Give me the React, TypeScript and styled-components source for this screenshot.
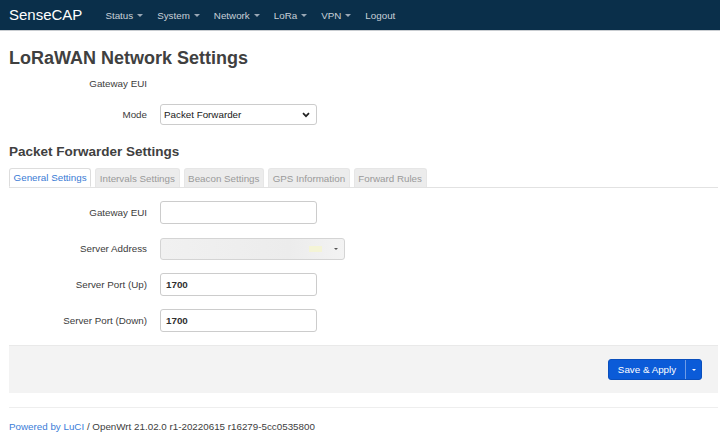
import styled, { createGlobalStyle } from "styled-components";

const GlobalStyle = createGlobalStyle`
html, body {
margin: 0;
padding: 0;
background: #ffffff;
}
body {
font-family: "Liberation Sans", Arial, sans-serif;
color: #404040;
font-size: 9.8px;
}
`;

const Header = styled.header`
height: 30px;
background-color: #0a2f4a;
border-bottom: 1px solid #c9cdd1;
display: flex;
align-items: center;
padding: 0 9px;
`;
const Brand = styled.div`
font-size: 15px;
color: #ffffff;
line-height: 18px;
margin-right: 23px;
margin-top: -1px;
`;
const Menu = styled.nav`
display: flex;
align-items: center;
gap: 14px;
`;
const MenuItem = styled.div`
display: flex;
align-items: center;
gap: 4px;
color: #c8d0d8;
font-size: 9.8px;
`;
const Caret = styled.span`
width: 0;
height: 0;
border-left: 3px solid transparent;
border-right: 3px solid transparent;
border-top: 3px solid #9aa8b5;
`;

const Main = styled.main`
padding: 0 2px 0 9px;
`;
const Title = styled.h2`
margin: 16px 0 0;
font-size: 18px;
line-height: 22px;
font-weight: bold;
color: #404040;
`;
const Row = styled.div<{ $gap?: number }>`
display: flex;
align-items: center;
min-height: 23px;
margin-top: ${(p) => p.$gap ?? 13}px;
`;
const Label = styled.div`
width: 138px;
text-align: right;
margin-right: 13px;
font-size: 9.8px;
color: #3c3c3c;
`;
const SelectBox = styled.div<{ $w: number }>`
width: ${(p) => p.$w}px;
height: 21px;
box-sizing: border-box;
border: 1px solid #cccccc;
border-radius: 3px;
background: #ffffff;
display: flex;
align-items: center;
justify-content: space-between;
padding: 0 6px 0 3px;
font-size: 9.8px;
color: #202020;
`;
const Input = styled.div`
width: 157px;
height: 23px;
box-sizing: border-box;
border: 1px solid #cccccc;
border-radius: 3px;
background: #ffffff;
display: flex;
align-items: center;
padding: 0 5px;
font-size: 9.8px;
font-weight: bold;
color: #303030;
`;
const BlurSelect = styled.div`
width: 185px;
height: 22px;
box-sizing: border-box;
border: 1px solid #d4d4d4;
border-radius: 3px;
background: linear-gradient(90deg, #f1f1f1 0%, #ececec 70%, #f3f3f3 100%);
display: flex;
align-items: center;
justify-content: flex-end;
padding-right: 6px;
gap: 12px;
`;
const Smudge = styled.span`
width: 13px;
height: 6px;
background: #f4f4d6;
`;
const MiniCaret = styled.span`
width: 0;
height: 0;
border-left: 2px solid transparent;
border-right: 2px solid transparent;
border-top: 2px solid #555555;
`;
const SectionTitle = styled.h3`
margin: 17px 0 0;
font-size: 13.5px;
line-height: 18px;
font-weight: bold;
color: #404040;
`;
const Tabs = styled.ul`
list-style: none;
margin: 7px 0 0;
padding: 0;
display: flex;
gap: 4px;
border-bottom: 1px solid #e2e2e2;
height: 19px;
`;
const Tab = styled.li<{ $active?: boolean }>`
height: 19px;
box-sizing: border-box;
padding: 0 3.6px;
border: 1px solid ${(p) => (p.$active ? "#dddddd" : "#e6e6e6")};
border-bottom: ${(p) => (p.$active ? "1px solid #ffffff" : "none")};
border-radius: 3px 3px 0 0;
background: ${(p) => (p.$active ? "#ffffff" : "#ececec")};
color: ${(p) => (p.$active ? "#3a7bd5" : "#9a9a9a")};
font-size: 9.8px;
display: flex;
align-items: center;
`;
const ActionBar = styled.div`
margin-top: 13px;
height: 48px;
box-sizing: border-box;
background: #f3f3f3;
border-top: 1px solid #e9e9e9;
display: flex;
align-items: center;
justify-content: flex-end;
padding-right: 16px;
`;
const SplitButton = styled.div`
display: flex;
height: 21px;
border-radius: 3px;
background: #0b5bd8;
border: 1px solid #0a4fbd;
box-sizing: border-box;
overflow: hidden;
`;
const ButtonMain = styled.div`
width: 76px;
display: flex;
align-items: center;
justify-content: center;
color: #ffffff;
font-size: 9.8px;
border-right: 1px solid #6f9be6;
`;
const ButtonDrop = styled.div`
width: 15px;
display: flex;
align-items: center;
justify-content: center;
`;
const WhiteCaret = styled(MiniCaret)`
border-top-color: #ffffff;
`;
const Footer = styled.footer`
margin-top: 14px;
border-top: 1px solid #eeeeee;
padding-top: 12px;
font-size: 9.8px;
line-height: 13px;
color: #404040;
`;
const FooterLink = styled.a`
color: #3b7dd8;
text-decoration: none;
`;

const Chevron = () => (
  <svg width="8" height="6" viewBox="0 0 8 6">
    <path d="M1 1.2 L4 4.2 L7 1.2" fill="none" stroke="#222" strokeWidth="1.7" />
  </svg>
);

const menu = ["Status", "System", "Network", "LoRa", "VPN"];
const tabs = ["General Settings", "Intervals Settings", "Beacon Settings", "GPS Information", "Forward Rules"];

export default function App() {
  return (
    <>
      <GlobalStyle />
      <Header>
        <Brand>SenseCAP</Brand>
        <Menu>
          {menu.map((m) => (
            <MenuItem key={m}>
              {m}
              <Caret />
            </MenuItem>
          ))}
          <MenuItem>Logout</MenuItem>
        </Menu>
      </Header>
      <Main>
        <Title>LoRaWAN Network Settings</Title>
        <Row $gap={3}>
          <Label>Gateway EUI</Label>
        </Row>
        <Row $gap={8}>
          <Label>Mode</Label>
          <SelectBox $w={157}>
            Packet Forwarder
            <Chevron />
          </SelectBox>
        </Row>
        <SectionTitle>Packet Forwarder Settings</SectionTitle>
        <Tabs>
          {tabs.map((t, i) => (
            <Tab key={t} $active={i === 0}>
              {t}
            </Tab>
          ))}
        </Tabs>
        <Row>
          <Label>Gateway EUI</Label>
          <Input />
        </Row>
        <Row>
          <Label>Server Address</Label>
          <BlurSelect>
            <Smudge />
            <MiniCaret />
          </BlurSelect>
        </Row>
        <Row>
          <Label>Server Port (Up)</Label>
          <Input>1700</Input>
        </Row>
        <Row>
          <Label>Server Port (Down)</Label>
          <Input>1700</Input>
        </Row>
        <ActionBar>
          <SplitButton>
            <ButtonMain>Save &amp; Apply</ButtonMain>
            <ButtonDrop>
              <WhiteCaret />
            </ButtonDrop>
          </SplitButton>
        </ActionBar>
        <Footer>
          <FooterLink href="#">Powered by LuCI</FooterLink> / OpenWrt 21.02.0 r1-20220615 r16279-5cc0535800
        </Footer>
      </Main>
    </>
  );
}
